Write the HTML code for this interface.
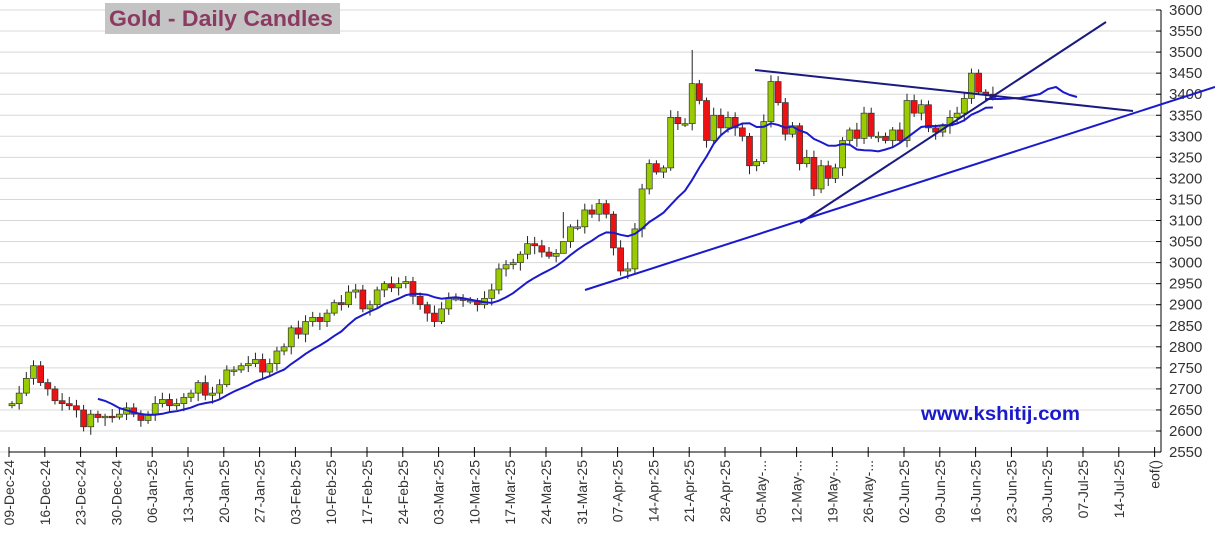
<!DOCTYPE html>
<html><head><meta charset="utf-8"><style>
html,body{margin:0;padding:0;background:#fff;}
svg{display:block}
text{font-family:"Liberation Sans",Arial,sans-serif}
</style></head><body>
<svg id="s" width="1215" height="547" viewBox="0 0 1215 547" xmlns="http://www.w3.org/2000/svg">
<g id="grid"></g>
<g id="axes"></g>
<g id="cand"></g>
<g id="lines" fill="none">
<polyline id="ma" stroke="#1a1acc" stroke-width="2"/>
<polyline points="985,99 1000,99 1020,98 1040,94 1048,89 1056,87 1063,92 1070,95 1077,97" stroke="#1a1acc" stroke-width="2"/>
<line x1="755" y1="70" x2="1133" y2="111" stroke="#1a1a80" stroke-width="2"/>
<line x1="800" y1="223" x2="1106" y2="22" stroke="#1a1a80" stroke-width="2"/>
<line x1="585" y1="290" x2="1215" y2="87" stroke="#1a1acc" stroke-width="2"/>
</g>
<rect x="105" y="3" width="235" height="31" fill="#c4c4c4"/>
<text x="109" y="26" font-size="22.5" font-weight="bold" fill="#8b3a62" textLength="224" lengthAdjust="spacingAndGlyphs">Gold - Daily Candles</text>
<text x="921" y="420" font-size="19" font-weight="bold" fill="#1a1acc" textLength="159" lengthAdjust="spacingAndGlyphs">www.kshitij.com</text>
</svg>
<script>
var NS="http://www.w3.org/2000/svg";
function el(p,t,a,txt){var e=document.createElementNS(NS,t);for(var k in a)e.setAttribute(k,a[k]);if(txt)e.textContent=txt;p.appendChild(e);return e;}
function Y(p){return 10+(3600-p)*0.421;}
var g=document.getElementById('grid'),ax=document.getElementById('axes');
for(var p=2550;p<=3600;p+=50){var y=Y(p);
 el(g,'line',{x1:0,x2:1161,y1:y,y2:y,stroke:'#d8d8d8','stroke-width':1});
 el(ax,'line',{x1:1156,x2:1161,y1:y,y2:y,stroke:'#000'});
 el(ax,'text',{x:1169,y:y+5,'font-size':15,fill:'#333'},String(p));}
el(ax,'line',{x1:1161,x2:1161,y1:Y(3600),y2:Y(2550),stroke:'#000'});
el(ax,'line',{x1:9,x2:1161,y1:452,y2:452,stroke:'#000'});
var labs=["09-Dec-24","16-Dec-24","23-Dec-24","30-Dec-24","06-Jan-25","13-Jan-25","20-Jan-25","27-Jan-25","03-Feb-25","10-Feb-25","17-Feb-25","24-Feb-25","03-Mar-25","10-Mar-25","17-Mar-25","24-Mar-25","31-Mar-25","07-Apr-25","14-Apr-25","21-Apr-25","28-Apr-25","05-May-...","12-May-...","19-May-...","26-May-...","02-Jun-25","09-Jun-25","16-Jun-25","23-Jun-25","30-Jun-25","07-Jul-25","14-Jul-25","eof()"];
for(var i=0;i<labs.length;i++){var x=9+i*35.8;
 el(ax,'line',{x1:x,x2:x,y1:447,y2:457,stroke:'#000'});
 el(ax,'text',{x:0,y:0,'font-size':14,fill:'#333','text-anchor':'end',transform:'translate('+(x+5)+',460) rotate(-90)'},labs[i]);}
var c=[2665,2690,2725,2755,2715, 2700,2672,2665,2660,2650, 2610,2640,2632,2635,2633, 2640,2655,2640,2625,2640,
2665,2675,2660,2665,2680, 2690,2715,2685,2690,2710, 2745,2745,2755,2760,2770, 2740,2760,2790,2800,2845,
2830,2860,2870,2860,2880, 2905,2900,2930,2935,2890, 2900,2935,2950,2940,2950, 2955,2920,2900,2880,2860,
2890,2915,2915,2910,2910, 2900,2915,2935,2985,2995, 3000,3020,3045,3040,3025, 3015,3022,3050,3085,3085,
3125,3115,3140,3115,3035, 2980,2985,3080,3175,3235, 3215,3225,3345,3330,3330, 3425,3385,3290,3350,3320,
3345,3320,3300,3230,3240, 3335,3430,3380,3305,3325, 3235,3250,3175,3230,3200, 3225,3290,3315,3295,3355,
3300,3300,3290,3315,3290, 3385,3355,3375,3320,3310, 3325,3345,3355,3390,3450, 3405,3400,3392];
var cg=document.getElementById('cand'),prev=2660,pts=[];
for(var d=0;d<c.length;d++){var x=12+d*7.16,o=prev,cl=c[d];prev=cl;
 var hi=Math.max(o,cl)+6+((d*37)%13),lo=Math.min(o,cl)-6-((d*53)%15);
 if(d==95)hi=3505;if(d==77)lo=3120;
 el(cg,'line',{x1:x,x2:x,y1:Y(hi),y2:Y(lo),stroke:'#222'});
 var t=Y(Math.max(o,cl)),h=Math.max(1.5,Math.abs(Y(o)-Y(cl)));
 el(cg,'rect',{x:x-3,y:t,width:6,height:h,fill:cl>=o?'#99cc00':'#ee1111',stroke:'#333','stroke-width':0.7});
 if(d>=12){var s=0;for(var k=d-11;k<=d;k++)s+=c[k];pts.push(x.toFixed(1)+','+Y(s/12).toFixed(1));}}
document.getElementById('ma').setAttribute('points',pts.join(' '));
</script>
</body></html>
